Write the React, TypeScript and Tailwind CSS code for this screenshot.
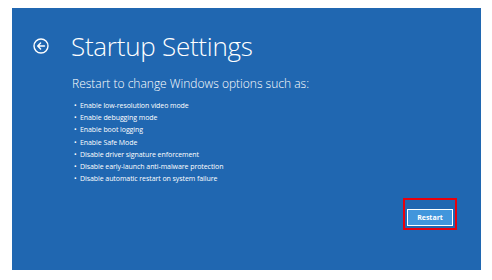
import React from 'react';

const options = [
  'Enable low-resolution video mode',
  'Enable debugging mode',
  'Enable boot logging',
  'Enable Safe Mode',
  'Disable driver signature enforcement',
  'Disable early-launch anti-malware protection',
  'Disable automatic restart on system failure',
];

const BackIcon: React.FC = () => (
  <svg width="16" height="16" viewBox="0 0 16 16" fill="none" stroke="white" strokeWidth={1.4}>
    <circle cx="8" cy="8" r="7" />
    <path d="M11.5 8H4.8M7.6 5.1L4.7 8l2.9 2.9" strokeLinecap="round" strokeLinejoin="round" />
  </svg>
);

const App: React.FC = () => {
  return (
    <div className="w-[492px] h-[280px] bg-white pt-[8px] pl-[12px]" style={{ fontFamily: '"Open Sans", "Noto Sans", sans-serif' }}>
      <div className="w-[469px] h-[262px] bg-[#2067b1] text-white flex flex-col pl-[21px]">
        <div className="flex items-center mt-[22px]">
          <BackIcon />
          <h1 className="ml-[22px] text-[26px] leading-[32px] font-light tracking-[-0.01em]">Startup Settings</h1>
        </div>

        <p className="ml-[39px] mt-[14px] text-[12px] leading-[16px] font-light">Restart to change Windows options such as:</p>

        <ul className="ml-[41px] mt-[8px] text-[7px] leading-[12.2px] tracking-[-0.01em]">
          {options.map((opt) => (
            <li key={opt} className="flex items-center">
              <span className="w-[6px]">•</span>
              <span>{opt}</span>
            </li>
          ))}
        </ul>

        <div className="flex justify-end pr-[24px] mt-[13px]">
          <div className="border-2 border-[#e8000b] p-[2px]">
            <button className="w-[46px] h-[17px] bg-[#4196dc] border border-white text-[7px] font-bold leading-none">
              Restart
            </button>
          </div>
        </div>
      </div>
    </div>
  );
};

export default App;
